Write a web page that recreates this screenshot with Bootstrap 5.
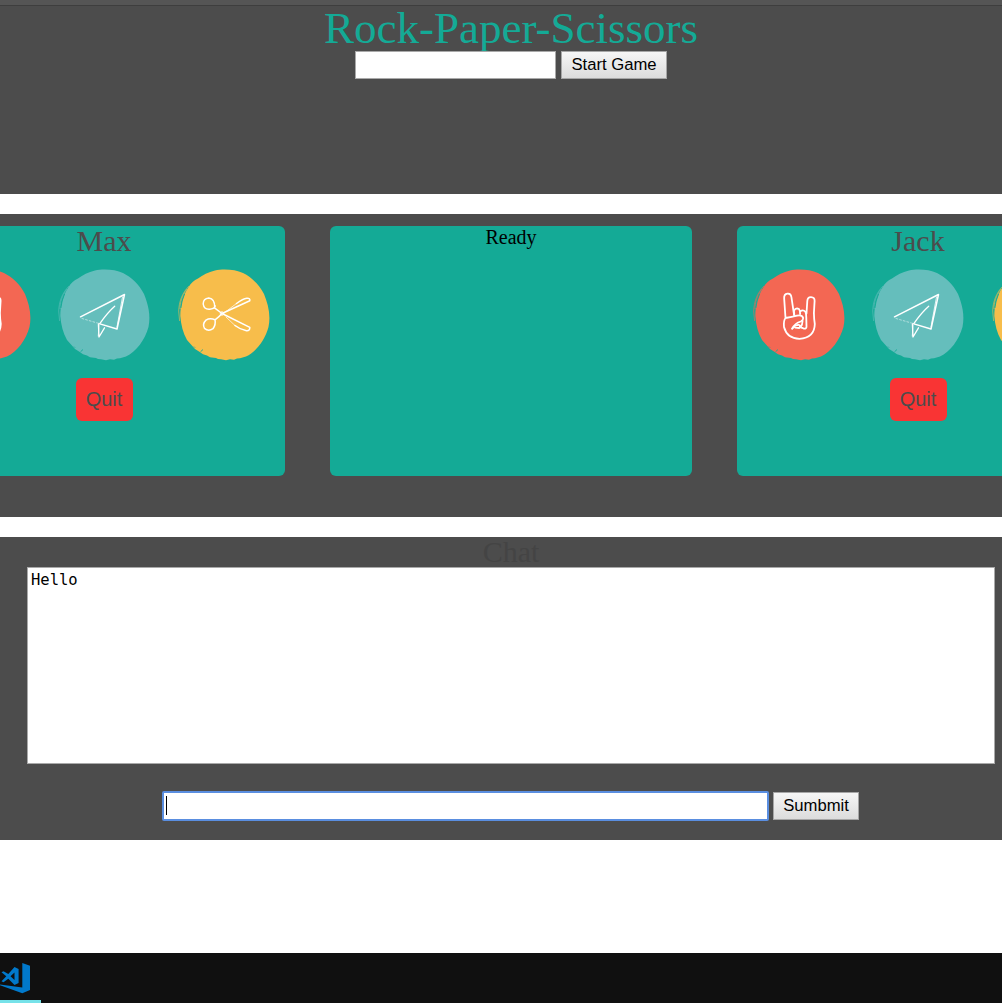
<!DOCTYPE html>
<html lang="en">
<head>
<meta charset="utf-8">
<meta name="viewport" content="width=device-width, initial-scale=1">
<title>Rock-Paper-Scissors</title>
<link href="https://cdn.jsdelivr.net/npm/bootstrap@5.3.0/dist/css/bootstrap.min.css" rel="stylesheet">
<style>
html, body { height: 1003px; overflow: hidden; }
body { font-family: "Liberation Serif", serif; background: #fff; color: #000; }
.page { width: 1022px; height: 1003px; }
.top-strip { height: 6px; background: #555; border-bottom: 1px solid #3e3e3e; }
.panel { background: #4c4c4c; }
.panel-head { height: 188px; }
.panel-game { height: 303px; padding-top: 12px; gap: 45px; }
.panel-chat { height: 303px; }
.gap-band { height: 20px; flex-shrink: 0; }
.title { font-size: 45px; line-height: 45px; color: #14aa96; }
.field { height: 28px; border: 1px solid #a9a9a9; background: #fff; border-radius: 0; padding: 0 2px; font: 16.67px "Liberation Sans", sans-serif; outline: 0; }
.field-name { width: 201px; }
.old-btn { height: 28px; border: 1px solid #a6a6a6; border-radius: 0; background: linear-gradient(#f6f6f6, #dcdcdc); padding: 0; font: 16.67px/26px "Liberation Sans", sans-serif; color: #000; }
.btn-start { width: 106px; margin-left: 5px; }
.btn-send { width: 86px; margin-left: 4px; }
.tile { width: 362px; height: 250px; border-radius: 6px; background: #14aa96; }
.player { font-size: 30px; line-height: 29px; height: 31px; color: #4c4c4c; }
.status { font-size: 20px; line-height: 22px; }
.choices { gap: 9.5px; padding-left: 2px; margin-top: 3px; }
.quit { width: 57px; height: 43px; border: 0; border-radius: 6px; background: #f93434; color: #4c4c4c; font: 20px/43px "Liberation Sans", sans-serif; margin-top: 8px; padding: 0; }
.chat-title { font-size: 30px; line-height: 29px; height: 30px; color: #444; }
.chat-log { width: 968px; height: 197px; resize: none; border: 1px solid #a9a9a9; border-radius: 0; padding: 2px 3px; font: 15.5px/20px "DejaVu Sans Mono", monospace; outline: 0; }
.send-row { margin-top: 27px; padding-right: 1px; }
.field-msg { width: 607px; height: 30px; border: 2px solid #5a8ee0; border-radius: 2px; background: #fff; padding: 2px 0 0 2px; }
.caret { width: 1px; height: 19px; background: #000; margin-top: 1px; }
.taskbar { height: 50px; background: #101010; }
.task-item { width: 41px; height: 50px; border-bottom: 3px solid #76e2e9; padding-top: 10px; }
</style>
<script src="https://cdn.jsdelivr.net/npm/bootstrap@5.3.0/dist/js/bootstrap.bundle.min.js"></script>
</head>
<body>
<svg width="0" height="0" class="position-absolute" aria-hidden="true">
  <defs>
    <g id="blob">
      <path stroke="none" d="M45 10.5 C52 8.7 65 9 73 13 C81 17 89 24 94 34 C98 44 101 55 98.5 67 C95 80 86 92 76 96.5 L70 98.3 67 98.6 64 99.8 60 99.3 56 100.3 51 99.3 48 99 46 98 40 97.3 37 95.5 33 94.3 29 91.5 25 89 21 84.5 17 80 C13 73 11 65 10.3 56 C10.3 45 13 36 18 28 C21 23 24 20 28 18.5 C33 15 38 12 45 10.5Z"/>
      <path d="M19 26 C12 33 9 42 8.7 51 L9.6 61 M17 29 C12 36 10 43 10 49" fill="none" stroke-width=".6"/>
      <path d="M14.5 34 Q11.5 41 10.9 48 M30.5 91.8 L33 89.5 M24 86.6 L25 87.6" fill="none" stroke="#14aa96" stroke-width=".9"/>
    </g>
    <g id="rock" fill="none" stroke="#fff" stroke-width="1.8" stroke-linecap="round" stroke-linejoin="round">
      <path d="M40.5 58 L39.2 39 Q38.7 34 42.4 33.6 Q45.9 33.2 46.4 37 L49.1 55 M61.5 53.5 L62.3 41 Q62.5 37 66 37.1 Q69.8 37.3 69.6 41 L68.9 53 Q69 59 69.8 64 Q69.5 77.8 54.5 78.8 Q42 78.5 39 67 Q38.4 60.5 40.5 58 Q47 57 52 55.7 Q57 54.5 58.2 58 Q58.3 60.2 55.8 61.5 Q50 63 47.2 68.6"/>
      <path d="M49.3 55 L49 51 Q50.5 47.5 54 49 Q55.2 50.5 55.1 54 M55.1 51.5 Q58 49.2 60.3 51.6 Q61.4 53.5 61.3 58 L61.5 67 Q60.8 69.5 58 68.2 L55.5 67.4 Q57.5 65 57.6 60.8 M47.2 68.6 Q50.5 64.6 53.5 64.8 Q56 65 54.3 68 L50.3 67.6"/>
    </g>
    <g id="paper" fill="none" stroke="#fff" stroke-linecap="round" stroke-linejoin="round">
      <path d="M30.5 56.8 L74.5 34.5 L67 69 L49 63.6" stroke-width="1.5"/>
      <path d="M32 58.5 L49 63.5" stroke-width=".7" stroke-dasharray="1.8 2" opacity=".7"/>
      <path d="M64.7 46.2 Q57 53 50.2 63.2 M48.4 64.5 L49 77 L54.5 67.8" stroke-width="1.3"/>
      <path d="M72.5 37 L67 67 M49 65 L48.3 76" stroke-width=".8"/>
    </g>
    <g id="scissors" fill="none" stroke="#fff" stroke-width="1.5" stroke-linecap="round" stroke-linejoin="round">
      <path d="M44.7 47.5 Q45 39 38.8 38.1 Q33.2 38.6 33.2 44 Q34 49.6 39.6 49.2 Q44 49 45.3 46 M44.5 47.8 L52 53.5 L79.8 40.8 Q80.5 38 76.8 38.2 Q73 38.4 66.5 43.5"/>
      <path d="M66.5 43.5 L56 51.5" stroke-width=".7"/>
      <path d="M52 53.5 Q49.5 56.5 45 59.8 Q40 57.7 36 60.1 Q32 64 34.5 68.4 Q38.5 71.8 43 68.7 Q46 64.5 45 59.8 M52 53.5 L79.8 67.3 Q80 71 76.5 70.7 Q70 69.5 65 65.5"/>
      <path d="M65 65.5 L56 57" stroke-width=".7"/>
      <circle cx="52" cy="53.5" r="1.7" stroke-width="1"/>
    </g>
  </defs>
</svg>
<div class="page d-flex flex-column overflow-hidden">
  <div class="top-strip flex-shrink-0"></div>
  <header class="panel panel-head text-center flex-shrink-0">
    <div class="title">Rock-Paper-Scissors</div>
    <div class="d-flex justify-content-center">
      <input class="field field-name" type="text" aria-label="Name">
      <button class="old-btn btn-start" type="button">Start Game</button>
    </div>
  </header>
  <div class="gap-band"></div>
  <main class="panel panel-game d-flex justify-content-center flex-shrink-0">
    <section class="tile text-center flex-shrink-0">
      <div class="player">Max</div>
      <div class="choices d-flex justify-content-center">
        <svg class="flex-shrink-0" width="110" height="110" viewBox="0 0 110 110" fill="#f36753" stroke="#f36753"><use href="#blob"/><use href="#rock"/></svg>
        <svg class="flex-shrink-0" width="110" height="110" viewBox="0 0 110 110" fill="#65bebc" stroke="#65bebc"><use href="#blob"/><use href="#paper"/></svg>
        <svg class="flex-shrink-0" width="110" height="110" viewBox="0 0 110 110" fill="#f7bd4b" stroke="#f7bd4b"><use href="#blob"/><use href="#scissors"/></svg>
      </div>
      <button class="quit" type="button">Quit</button>
    </section>
    <section class="tile text-center flex-shrink-0"><div class="status">Ready</div></section>
    <section class="tile text-center flex-shrink-0">
      <div class="player">Jack</div>
      <div class="choices d-flex justify-content-center">
        <svg class="flex-shrink-0" width="110" height="110" viewBox="0 0 110 110" fill="#f36753" stroke="#f36753"><use href="#blob"/><use href="#rock"/></svg>
        <svg class="flex-shrink-0" width="110" height="110" viewBox="0 0 110 110" fill="#65bebc" stroke="#65bebc"><use href="#blob"/><use href="#paper"/></svg>
        <svg class="flex-shrink-0" width="110" height="110" viewBox="0 0 110 110" fill="#f7bd4b" stroke="#f7bd4b"><use href="#blob"/><use href="#scissors"/></svg>
      </div>
      <button class="quit" type="button">Quit</button>
    </section>
  </main>
  <div class="gap-band"></div>
  <section class="panel panel-chat d-flex flex-column align-items-center flex-shrink-0">
    <div class="chat-title">Chat</div>
    <textarea class="chat-log" aria-label="Chat log" spellcheck="false">Hello</textarea>
    <div class="send-row d-flex align-items-center">
      <div class="field-msg"><div class="caret"></div></div>
      <button class="old-btn btn-send" type="button">Sumbmit</button>
    </div>
  </section>
  <footer class="taskbar mt-auto flex-shrink-0">
    <div class="task-item">
      <svg class="d-block" width="31" height="31" viewBox="0 0 31 31" fill="#0179cb">
        <path d="M22.3 0 L30 2.8 V27 L22.3 30.3 L0 22.2 V21.6 L22.3 24.6Z"/>
        <path fill-rule="evenodd" d="M14.5 4 L18.6 6 V20 L14.5 22 L8.3 15.7 L3.5 19.3 L1.5 18.3 L6.3 13.3 L1.5 9.3 L3.5 8.3 L8.3 10.9Z M14.5 9.5 L10.5 13.2 L14.5 17Z"/>
      </svg>
    </div>
  </footer>
</div>
</body>
</html>
